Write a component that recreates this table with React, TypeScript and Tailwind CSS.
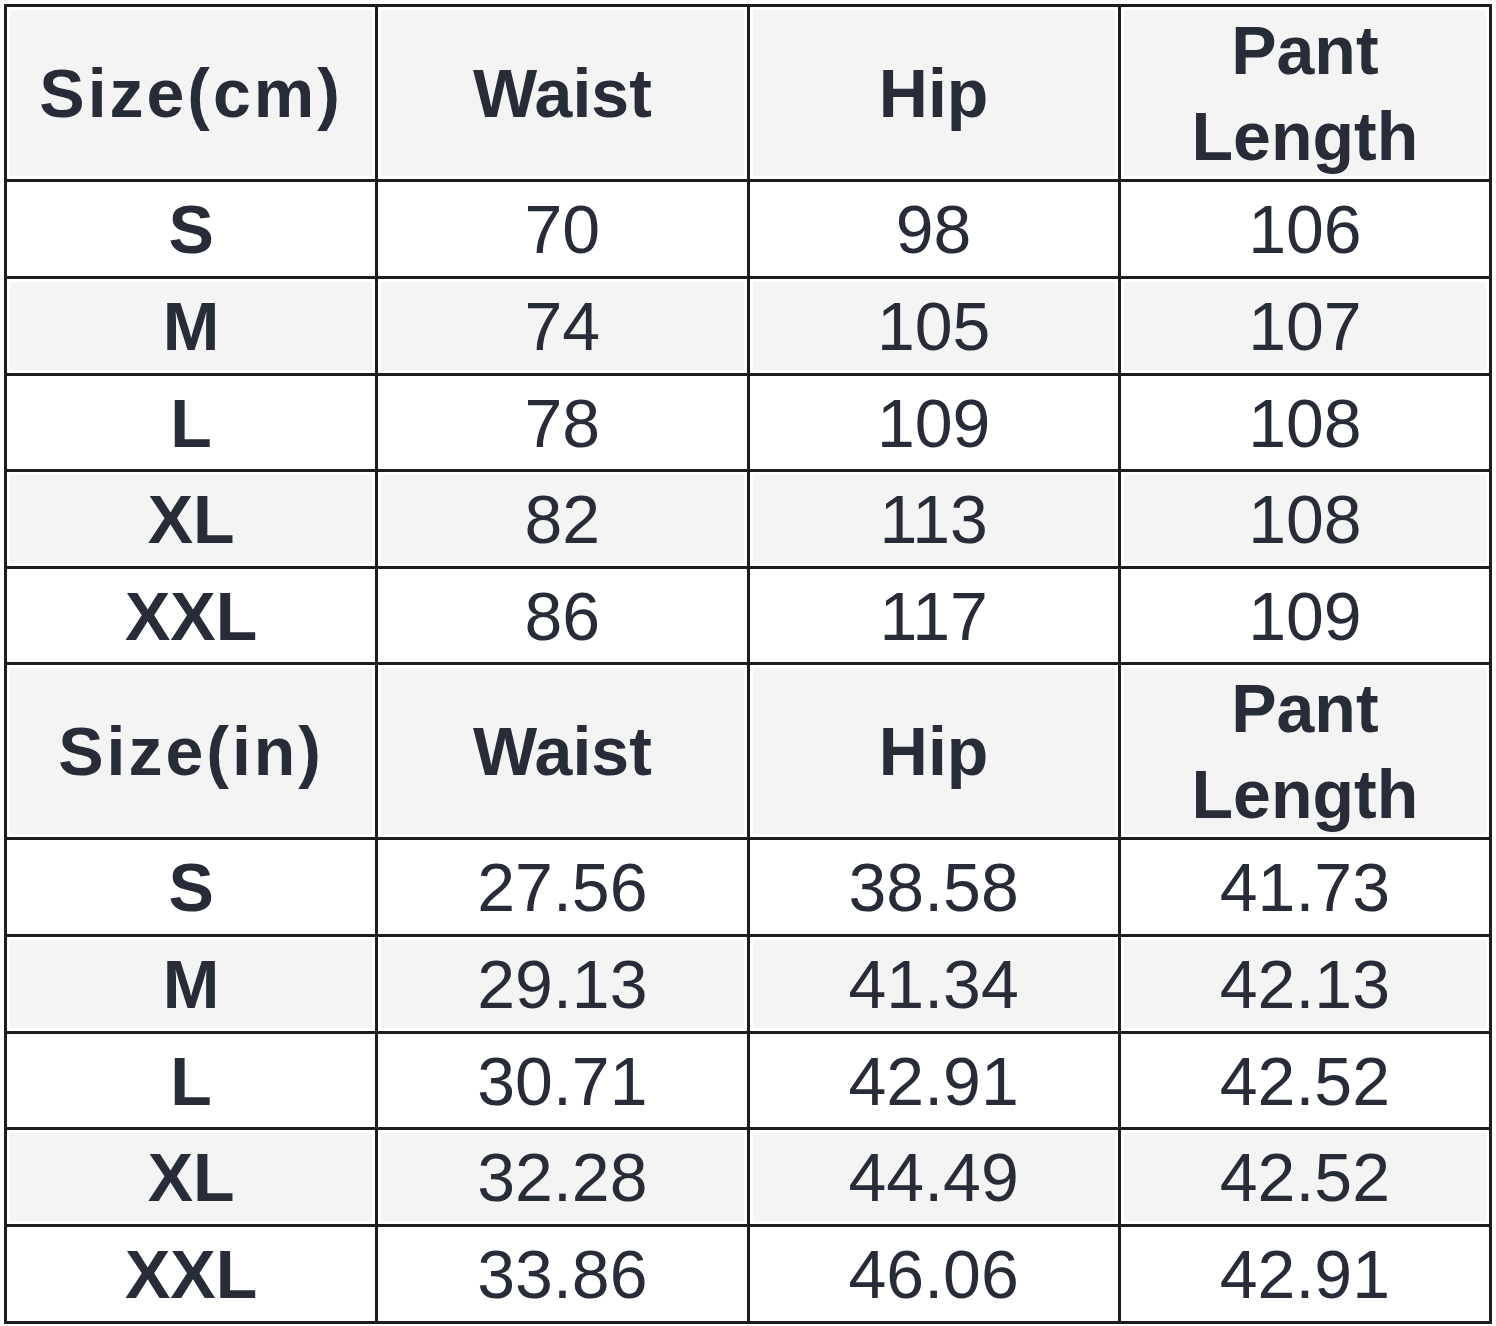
const HEAD_CM = ['Size(cm)', 'Waist', 'Hip', 'Pant Length'];
const HEAD_IN = ['Size(in)', 'Waist', 'Hip', 'Pant Length'];

const CM_ROWS = [
  ['S', '70', '98', '106'],
  ['M', '74', '105', '107'],
  ['L', '78', '109', '108'],
  ['XL', '82', '113', '108'],
  ['XXL', '86', '117', '109'],
];

const IN_ROWS = [
  ['S', '27.56', '38.58', '41.73'],
  ['M', '29.13', '41.34', '42.13'],
  ['L', '30.71', '42.91', '42.52'],
  ['XL', '32.28', '44.49', '42.52'],
  ['XXL', '33.86', '46.06', '42.91'],
];

// row pitch in the source image is not quite even
const CM_HEIGHTS = ['h-[97px]', 'h-[97px]', 'h-[96px]', 'h-[97px]', 'h-[96px]'];
const IN_HEIGHTS = ['h-[97px]', 'h-[97px]', 'h-[96px]', 'h-[97px]', 'h-[97px]'];

function HeaderRow({ cells, height }: { cells: string[]; height: string }) {
  return (
    <tr>
      {cells.map((c, i) => (
        <td
          key={i}
          className={`${height} border-[3px] border-[#1d1d1d] bg-[#f4f4f4] shadow-[inset_0_0_0_3px_#ffffff] text-center align-middle font-bold leading-[86px] ${
            i === 0 ? 'tracking-[3px]' : ''
          }`}
        >
          {c === 'Pant Length' ? (
            <>
              Pant
              <br />
              Length
            </>
          ) : (
            c
          )}
        </td>
      ))}
    </tr>
  );
}

function DataRow({ cells, shaded, height }: { cells: string[]; shaded: boolean; height: string }) {
  return (
    <tr>
      {cells.map((c, i) => (
        <td
          key={i}
          className={`${height} border-[3px] border-[#1d1d1d] text-center align-middle leading-none ${
            shaded ? 'bg-[#f4f4f4] shadow-[inset_0_0_0_3px_#ffffff]' : 'bg-white'
          } ${i === 0 ? 'font-bold' : 'font-normal'}`}
        >
          {c}
        </td>
      ))}
    </tr>
  );
}

export default function App() {
  return (
    <div className="w-[1496px] h-[1326px] bg-white pt-[4px] pl-[4px]">
      <table
        className="w-[1488px] table-fixed border-collapse text-[68px] text-[#272c38]"
        style={{ fontFamily: '"Liberation Sans", Arial, sans-serif' }}
      >
        <tbody>
          <HeaderRow cells={HEAD_CM} height="h-[174px]" />
          {CM_ROWS.map((r, i) => (
            <DataRow key={`cm${i}`} cells={r} shaded={i % 2 === 1} height={CM_HEIGHTS[i]} />
          ))}
          <HeaderRow cells={HEAD_IN} height="h-[175px]" />
          {IN_ROWS.map((r, i) => (
            <DataRow key={`in${i}`} cells={r} shaded={i % 2 === 1} height={IN_HEIGHTS[i]} />
          ))}
        </tbody>
      </table>
    </div>
  );
}
